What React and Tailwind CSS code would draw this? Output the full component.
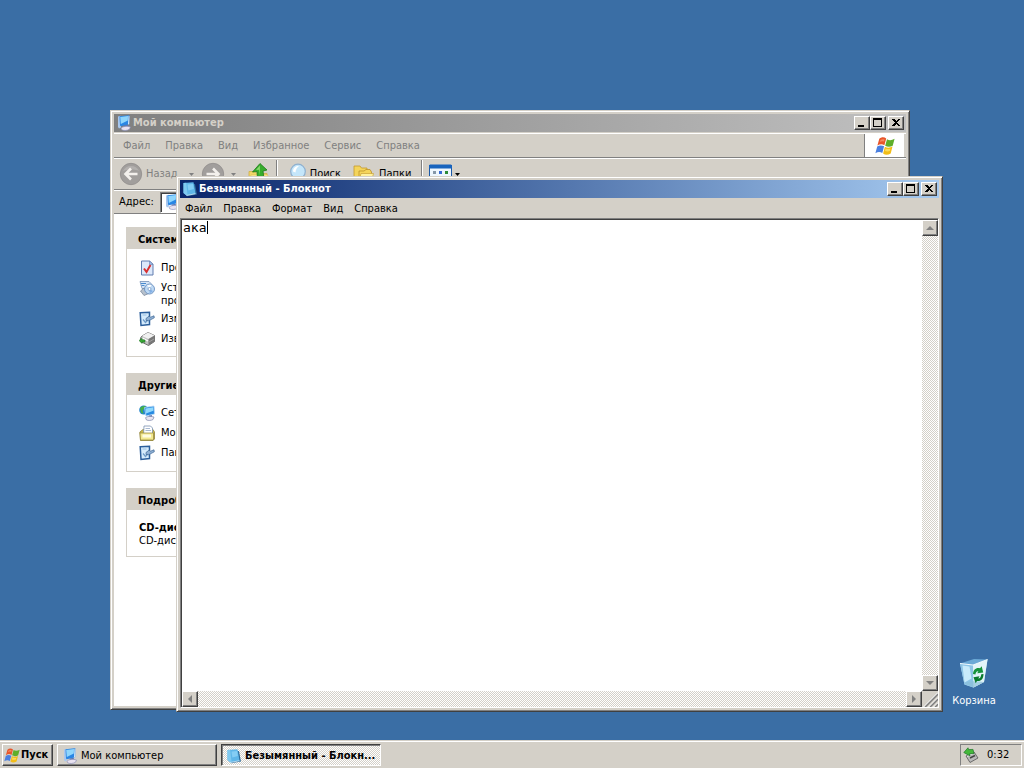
import React from "react";

const raised =
  "border border-t-white border-l-white border-r-[#404040] border-b-[#404040] bg-[#d4d0c8] shadow-[inset_-1px_-1px_#808080]";
const dither =
  "bg-[repeating-conic-gradient(#ffffff_0_25%,#d4d0c8_0_50%)] bg-[length:2px_2px]";

function Flag({ className }) {
  return (
    <svg viewBox="0 0 20 18" className={className} aria-hidden="true">
      <path d="M4.300 1.800C6.300-.2 9.300-.2 11.200 1.400L9.400 8.300C7.300 6.800 4.800 7 2.400 8.600Z" fill="#e8562a" />
      <path d="M5.500 3c1.400-1 2.800-1.100 4-.5L9 4.500c-1.500-.6-3-.4-4.200.4Z" fill="#f58a62" />
      <path d="M12 2.200c2.200 1.400 4.800 1.200 7.600-.4L17.700 8.700c-2.500 1.500-5.200 1.400-7.500.1Z" fill="#5fae2a" />
      <path d="M2.200 9.500c2.300-1.500 4.700-1.400 6.900-.2L7.300 16C5.200 14.700 2.900 14.800.4 16.200Z" fill="#4a7fe0" />
      <path d="M9.900 9.800c2.400 1.200 5 1.200 7.600-.2l-1.800 6.800c-2.600 1.800-5.400 1.900-7.600.2Z" fill="#f2bd18" />
      <path d="M10.600 11.500c1.500.7 3.200.8 4.800.2l-.6 2.200c-1.600.7-3.300.6-4.800 0Z" fill="#fbdc5c" />
    </svg>
  );
}

function ComputerIcon({ className = "size-4" }) {
  return (
    <svg viewBox="0 0 16 16" className={className} aria-hidden="true">
      <path d="M2 1.500 4.500.8 5 12.500 3 13.500 2 12Z" fill="#a9c8ee" />
      <path d="M3.500 1.300 12.500.3c.8 0 1 .4 1 1L13.200 9.300 5 11.200 4 10.500Z" fill="#2a86e4" />
      <path d="M4.200 1.900 12 1 11.800 5.500 4.800 9Z" fill="#8fd6fc" />
      <path d="M12.500.8 13.500 1.300 13.200 9.300 12 9.600Z" fill="#d5e6f8" />
      <path d="m7.500 10.600 4-.9 1 2.300-4.500 1Z" fill="#5b79b8" />
      <path d="M5 13.200c1.800-1.900 6-2.500 9.500-1.200l-1 2.200c-2.500 1.500-5.500 1.700-7.800.6Z" fill="#e9e2f0" stroke="#8388b4" strokeWidth=".6" />
    </svg>
  );
}

function NotepadIcon() {
  return (
    <svg viewBox="0 0 16 16" className="size-4" aria-hidden="true">
      <path d="m4 4 9-1L15 13.500 5 15.300Z" fill="#2e6d9c" />
      <path d="M1.500 2 11.500 1.200 13.500 12.700 4.500 14.500 1.500 12Z" fill="#5fb6e8" />
      <path d="M1.500 2 4.200 1.800 5.500 13.800 4.500 14.500 1.500 12Z" fill="#7fc9f0" />
      <path d="M5.500 3.500 11 3 11.800 8 6.300 9.500Z" fill="#84cdf4" />
      <path d="M4.500 14.500 13.500 12.700" stroke="#e5f4fc" strokeWidth=".7" />
    </svg>
  );
}

function CheckDocIcon() {
  return (
    <svg viewBox="0 0 16 16" className="size-4 shrink-0" aria-hidden="true">
      <path d="M2.500 1h8L14 4.200V15H2.500Z" fill="#dce8fa" stroke="#617daf" />
      <path d="M10.500 1v3.500H14Z" fill="#a5bfe8" stroke="#617daf" strokeWidth=".6" />
      <path d="m5 8.500 2.500 3.500L11.500 5" fill="none" stroke="#d83030" strokeWidth="2" />
    </svg>
  );
}

function ProgramsIcon() {
  return (
    <svg viewBox="0 0 16 16" className="size-4 shrink-0" aria-hidden="true">
      <path d="M1 1.500h9l2 2v5H3Z" fill="#d7e6f7" stroke="#7690b7" strokeWidth=".8" />
      <path d="M2 3.500h5M2.500 5.500h3" stroke="#498bcf" />
      <path d="M1.500 11 5 8l6 5-6 2.500Z" fill="#b7c1cc" stroke="#718096" strokeWidth=".7" />
      <circle cx="10.500" cy="9" r="5" fill="#bed9f4" stroke="#6a90c0" strokeWidth=".9" />
      <path d="M10.500 9 8 5.500c1.500-1 3.500-1 4.500-.5Z" fill="#f8fcff" />
      <path d="m10.500 9 3.500 2c-.7 1.300-1.800 2-3.500 2Z" fill="#82b0e6" />
      <circle cx="10.500" cy="9" r="1.500" fill="#fff" stroke="#5580b4" strokeWidth=".6" />
    </svg>
  );
}

function SettingsIcon() {
  return (
    <svg viewBox="0 0 16 16" className="size-4 shrink-0" aria-hidden="true">
      <path d="M1.200 1.800 10.500 1.200V13.500L2 14.500Z" fill="#d5ebfc" stroke="#2c5f9c" strokeWidth="1.500" />
      <path d="m4 8.500 2.500 3 3-3.500" fill="none" stroke="#6f9bc8" strokeWidth="1.200" />
      <path d="M7 7.500 10 5.200l1.500 1 3.500-1.400.3 2-3.800 2L9.500 9.700 7 9.500Z" fill="#8fb0d4" stroke="#3c6593" strokeWidth=".7" />
      <path d="M3.500 4h4" stroke="#9cc0e2" />
    </svg>
  );
}

function EjectIcon() {
  return (
    <svg viewBox="0 0 16 16" className="size-4 shrink-0" aria-hidden="true">
      <path d="m3 5 6-3.500 6.500 3v6L9.500 14.500l-8-4V7Z" fill="#c2c2c2" stroke="#555" strokeWidth=".8" />
      <path d="m3 5 6-3.500 6.500 3L9.500 8Z" fill="#f0f0f0" />
      <path d="m9.500 8 6-3.500v6L9.500 14.500Z" fill="#777" />
      <path d="m3.500 7 5.500 3" stroke="#fff" strokeWidth="1.200" />
      <path d="m10 11 5-3" stroke="#aaa" strokeWidth=".8" />
      <path d="M0 9.500 3 7.300v1.400l3 .3v2.200L3 11V12.500Z" fill="#39a936" stroke="#1c6d22" strokeWidth=".5" />
    </svg>
  );
}

function NetworkIcon() {
  return (
    <svg viewBox="0 0 16 16" className="size-4 shrink-0" aria-hidden="true">
      <circle cx="4.700" cy="5" r="4.500" fill="#2385ce" />
      <path d="M1 3c1.500-2 4-2.500 6-1.800L5 4 3.500 5.500 4.500 9 2 7.500Z" fill="#46b048" />
      <path d="M5.500 2.500 15 1 15.500 9 7 11Z" fill="#268ae2" stroke="#bad8f5" strokeWidth=".8" />
      <path d="m6.500 3.500 7.700-1.300.2 3.500L7 8.500Z" fill="#91d9fc" />
      <path d="m10 10.500 3-.5v2.200l-3 .5Z" fill="#6d83b8" />
      <path d="M6.500 12.700c2-1.500 5-1.700 8.500-.7l-1 2.500c-2 1.200-4.500 1.200-6.500.5Z" fill="#e9e6f2" stroke="#7c86ab" strokeWidth=".7" />
    </svg>
  );
}

function DocumentsIcon() {
  return (
    <svg viewBox="0 0 16 16" className="size-4 shrink-0" aria-hidden="true">
      <path d="M.8 7 4 4.500h10L15.500 7v7L14 15.500H1.500Z" fill="#cdbb4c" stroke="#87782b" strokeWidth=".7" />
      <path d="M5 1h6.500L13.500 3v7.500H4.500Z" fill="#fff" stroke="#7890b0" strokeWidth=".8" />
      <path d="M6.500 3.500h4.500M6.500 5.500h5.500" stroke="#a9bad2" />
      <path d="M1 8h13.500v7H1.500Z" fill="#f3e991" stroke="#948539" strokeWidth=".7" />
      <path d="M3.500 9.500h8.500v3H3.500Z" fill="#fffce2" />
    </svg>
  );
}

function RoundArrow({ flip }) {
  return (
    <svg viewBox="0 0 24 24" className={flip ? "size-6 rotate-180" : "size-6"} aria-hidden="true">
      <circle cx="12" cy="12" r="10.700" fill="#a19e9c" stroke="#908d8b" strokeWidth=".8" />
      <path d="M4 9a9 9 0 0 1 16 0c-4-2-10-2-16 0Z" fill="#b3b0ae" />
      <path d="M18.500 12H7M12 6.500 6.500 12l5.500 5.500" fill="none" stroke="#f3f0ec" strokeWidth="2.600" />
    </svg>
  );
}

function UpFolderIcon() {
  return (
    <svg viewBox="0 0 22 22" className="size-[22px]" aria-hidden="true">
      <path d="M1 8.500h6l2 2h10V20H1Z" fill="#f2d668" stroke="#d0ae45" strokeWidth=".8" />
      <path d="M3 12h17l-2 8H1Z" fill="#fff3a2" stroke="#d5bb55" strokeWidth=".6" />
      <path d="m12 .5 7 6.500-4 1 .8 6.500L9.500 16.500 9 8.500l-4.500.5Z" fill="#37ac2c" stroke="#1c7a19" strokeWidth=".8" />
      <path d="m12 2.500-4 4.500 3-.3.500 6Z" fill="#8bdc70" />
    </svg>
  );
}

function SearchIcon() {
  return (
    <svg viewBox="0 0 20 22" className="h-[22px] w-5" aria-hidden="true">
      <path d="m5 15-3 5" stroke="#9b8662" strokeWidth="3" />
      <circle cx="10" cy="8.500" r="7.300" fill="#c4e6fa" stroke="#8fb0cf" strokeWidth="1.200" />
      <path d="M5 8.500C5 5 7.500 3 11 3 9 4.500 7.500 6.500 7.500 9.500Z" fill="#fff" />
    </svg>
  );
}

function FoldersIcon() {
  return (
    <svg viewBox="0 0 22 20" className="h-5 w-[22px]" aria-hidden="true">
      <path d="M1 2h6l1.500 2H14v10H1Z" fill="#f4d45b" stroke="#c49a2b" strokeWidth=".8" />
      <path d="M6 7h5l2-1.500h4L18.500 8v9H6Z" fill="#f5d55c" stroke="#bd922a" strokeWidth=".8" />
      <path d="M8 9.500h12.500L18.500 17H6Z" fill="#fff1a0" stroke="#c9a136" strokeWidth=".7" />
    </svg>
  );
}

function ViewsIcon() {
  return (
    <svg viewBox="0 0 23 20" className="h-5 w-[23px]" aria-hidden="true">
      <rect x=".5" y="1.500" width="22" height="18" fill="#eef6fd" stroke="#1c5aa8" />
      <path d="M0 1.500 1 .5h21l1 1v3H0Z" fill="#1763bd" />
      <path d="M4 7h3v3H4zM4 13h3v3H4z" fill="#8597a8" />
      <path d="M10 7h3v3h-3zM10 13h3v3h-3z" fill="#3569d4" />
      <path d="M16 7h3v3h-3zM16 13h3v3h-3z" fill="#2b8b37" />
    </svg>
  );
}

function Caret({ className = "" }) {
  return (
    <svg viewBox="0 0 5 3" className={`h-[3px] w-[5px] shrink-0 ${className}`} aria-hidden="true">
      <path d="M0 0h5L2.500 3Z" fill="currentColor" />
    </svg>
  );
}

function CaptionButtons() {
  return (
    <div className="flex shrink-0">
      <button aria-label="Свернуть" className={`flex h-[14px] w-4 items-end justify-start pb-[2px] pl-[3px] ${raised}`}>
        <span className="h-[2px] w-[6px] bg-black" />
      </button>
      <button aria-label="Развернуть" className={`flex h-[14px] w-4 items-start justify-start pl-[2px] pt-px ${raised}`}>
        <span className="h-[9px] w-[9px] border border-t-2 border-black" />
      </button>
      <button aria-label="Закрыть" className={`ml-[2px] flex h-[14px] w-4 items-start justify-start pl-[3px] pt-[2px] ${raised}`}>
        <svg viewBox="0 0 8 7" className="h-[7px] w-2" shapeRendering="crispEdges" aria-hidden="true">
          <path d="M0 0h2l2 2 2-2h2L5 3.500 8 7H6L4 5 2 7H0l3-3.500Z" fill="#000" />
        </svg>
      </button>
    </div>
  );
}

function TitleBar({ icon, title, active }) {
  return (
    <header
      className={`flex h-[18px] shrink-0 items-center gap-px pl-[2px] pr-[2px] text-[11px] font-bold ${
        active
          ? "bg-linear-to-r from-[#0a246a] to-[#a6caf0] text-white"
          : "bg-linear-to-r from-[#808080] to-[#c0c0c0] text-[#d4d0c8]"
      }`}
    >
      {icon}
      <h2 className="min-w-0 flex-1 truncate">{title}</h2>
      <CaptionButtons />
    </header>
  );
}

function Frame({ className, label, children }) {
  return (
    <section
      aria-label={label}
      className={`absolute flex flex-col border border-t-[#d4d0c8] border-l-[#d4d0c8] border-r-[#404040] border-b-[#404040] bg-[#d4d0c8] p-[3px] shadow-[inset_1px_1px_#ffffff,inset_-1px_-1px_#808080] ${className}`}
    >
      {children}
    </section>
  );
}

function Panel({ title, children, className = "" }) {
  return (
    <section className="bg-white">
      <h3 className="flex h-[22px] items-center bg-[#d4d0c8] pl-3 pt-[3px] font-bold">{title}</h3>
      <div className={`border border-t-0 border-[#d4d0c8] pl-3 pr-2 ${className}`}>{children}</div>
    </section>
  );
}

function Task({ icon, children }) {
  return (
    <li>
      <a href="#" className="flex gap-[6px]">
        {icon}
        <span className="pt-px">{children}</span>
      </a>
    </li>
  );
}

function Separator() {
  return <span className="h-7 w-[2px] border-l border-r border-l-[#808080] border-r-white" />;
}

function Explorer() {
  return (
    <Frame label="Мой компьютер" className="left-[110px] top-[110px] h-[600px] w-[800px]">
      <TitleBar icon={<ComputerIcon />} title="Мой компьютер" />
      <div className="mt-px flex h-[25px] shrink-0 border-b border-t border-b-[#808080] border-t-white">
        <nav className="flex flex-1 items-center gap-[15px] pl-[9px] pt-px text-[#808080]">
          {["Файл", "Правка", "Вид", "Избранное", "Сервис", "Справка"].map((t) => (
            <button key={t}>{t}</button>
          ))}
        </nav>
        <div className="mr-[2px] flex w-10 items-center justify-center border-l border-l-[#808080] bg-white">
          <Flag className="h-[18px] w-5" />
        </div>
      </div>
      <div className="flex h-8 shrink-0 items-center border-b border-t border-b-[#808080] border-t-white pl-[5px]">
        <button className="flex items-center gap-[3px] text-[#808080]">
          <RoundArrow />
          Назад
          <Caret className="ml-2" />
        </button>
        <button aria-label="Вперед" className="ml-[7px] flex items-center gap-[6px] text-[#808080]">
          <RoundArrow flip />
          <Caret />
        </button>
        <button aria-label="Вверх" className="ml-3 mr-[6px]">
          <UpFolderIcon />
        </button>
        <Separator />
        <button className="ml-[10px] flex items-center gap-[2px]">
          <SearchIcon />
          Поиск
        </button>
        <button className="ml-3 mr-[10px] flex items-center gap-1">
          <FoldersIcon />
          Папки
        </button>
        <Separator />
        <button aria-label="Вид значков" className="ml-[6px] flex items-center gap-[3px]">
          <ViewsIcon />
          <Caret />
        </button>
      </div>
      <div className="flex h-6 shrink-0 items-center gap-[6px] border-b border-t border-b-[#808080] border-t-white pl-[5px] pr-1">
        <label htmlFor="address">Адрес:</label>
        <div className="flex h-[21px] min-w-0 flex-1 items-center gap-1 border border-b-white border-l-[#808080] border-r-white border-t-[#808080] bg-white pl-[3px] shadow-[inset_1px_1px_#404040]">
          <ComputerIcon />
          <input id="address" defaultValue="Мой компьютер" className="min-w-0 flex-1 bg-transparent outline-none" />
        </div>
      </div>
      <div className="min-h-0 flex-1 bg-white">
        <aside className="flex w-[222px] flex-col gap-4 pl-3 pt-[13px] leading-[13px]">
          <Panel title="Системные задачи" className="pb-[9px] pt-[11px]">
            <ul className="flex flex-col gap-1">
              <Task icon={<CheckDocIcon />}>Просмотр сведений</Task>
              <Task icon={<ProgramsIcon />}>
                Установка и удаление
                <br />
                программ
              </Task>
              <Task icon={<SettingsIcon />}>Изменение параметра</Task>
              <Task icon={<EjectIcon />}>Извлечь этот диск</Task>
            </ul>
          </Panel>
          <Panel title="Другие места" className="pb-[10px] pt-[10px]">
            <ul className="flex flex-col gap-1">
              <Task icon={<NetworkIcon />}>Сетевое окружение</Task>
              <Task icon={<DocumentsIcon />}>Мои документы</Task>
              <Task icon={<SettingsIcon />}>Панель управления</Task>
            </ul>
          </Panel>
          <Panel title="Подробно" className="pb-[9px] pt-[11px]">
            <p className="font-bold">CD-дисковод</p>
            <p>CD-дисковод</p>
          </Panel>
        </aside>
      </div>
    </Frame>
  );
}

const arrows = {
  up: "M4 0 8 4H0Z",
  down: "M0 0h8L4 4Z",
  left: "M4 0v8L0 4Z",
  right: "M0 0l4 4-4 4Z",
};

function ScrollButton({ dir, label }) {
  const vertical = dir === "up" || dir === "down";
  return (
    <button aria-label={label} className={`flex size-4 shrink-0 items-center justify-center ${raised}`}>
      <svg
        viewBox={vertical ? "0 0 8 4" : "0 0 4 8"}
        className={vertical ? "h-1 w-2" : "h-2 w-1"}
        aria-hidden="true"
      >
        <path d={arrows[dir]} fill="#808080" />
      </svg>
    </button>
  );
}

function Notepad() {
  return (
    <Frame label="Блокнот" className="left-[176px] top-[176px] h-[536px] w-[767px]">
      <TitleBar active icon={<NotepadIcon />} title="Безымянный - Блокнот" />
      <nav className="flex h-5 shrink-0 items-center gap-[11px] pl-[5px] pt-px">
        {["Файл", "Правка", "Формат", "Вид", "Справка"].map((t) => (
          <button key={t}>{t}</button>
        ))}
      </nav>
      <div className="grid min-h-0 flex-1 grid-cols-[1fr_16px] grid-rows-[1fr_16px] border border-b-white border-l-[#808080] border-r-white border-t-[#808080] pl-px pt-px shadow-[inset_1px_1px_#404040]">
        <div className="relative bg-white">
          <textarea
            aria-label="Текст"
            defaultValue="ака"
            spellCheck={false}
            className="block size-full resize-none px-px font-['DejaVu_Sans_Mono','Liberation_Mono',monospace] text-[13px] leading-[15px] outline-none"
          />
          <span className="absolute left-[25px] top-px h-[13px] w-px bg-black" />
        </div>
        <div className={`flex flex-col justify-between ${dither}`}>
          <ScrollButton dir="up" label="Прокрутить вверх" />
          <ScrollButton dir="down" label="Прокрутить вниз" />
        </div>
        <div className={`flex justify-between ${dither}`}>
          <ScrollButton dir="left" label="Прокрутить влево" />
          <ScrollButton dir="right" label="Прокрутить вправо" />
        </div>
        <svg viewBox="0 0 16 16" className="size-4" aria-hidden="true">
          <path d="M3 16 16 3M8 16l8-8M13 16l3-3" stroke="#808080" strokeWidth="1.800" />
          <path d="M1.500 16 16 1.500M6.500 16 16 6.500M11.500 16l4.500-4.500" stroke="#fff" />
        </svg>
      </div>
    </Frame>
  );
}

function RecycleBin() {
  return (
    <button className="absolute bottom-[32px] right-[12px] flex w-[76px] flex-col items-center gap-[5px] text-white">
      <svg viewBox="0 0 32 32" className="size-8" aria-hidden="true">
        <path d="M2 6.500 15 8 29.500 2.500 26 25 15.500 30.500 6.500 27.500Z" fill="#b7dcee" />
        <path d="m2 6.500 13 1.500.5 22.500L6.500 27.500Z" fill="#8cc4e6" />
        <path d="m4.500 8.500 7 1 2 12-7 4Z" fill="#c8ebfb" />
        <path d="M15 8 29.500 2.500 26 25 15.500 30.500Z" fill="#e1f3f8" />
        <path d="M2 6.500 16 2l13.500.5L15 8Z" fill="#6ba9d6" />
        <path d="M2 6.500 15 8 29.500 2.500" fill="none" stroke="#f4fcff" strokeWidth="1" />
        <path d="M6.500 26c5-2 12-2 19.500-1L15.500 30.500Z" fill="#8cbfd7" opacity=".7" />
        <path d="M15 17c.3-4.500 3.200-6.800 7-5.800l1.700-2 1.500 6.300-6 .8 1.200-2c-1.700-.3-2.700 1-3 3.200Z" fill="#16933c" />
        <path d="M25.500 17c0 5-2.500 7.500-6.500 7l-1.300 2.200-2.200-6 6-1-1.200 2.200c1.700 0 2.700-1.400 3-4.200Z" fill="#087a2b" />
      </svg>
      Корзина
    </button>
  );
}

function Taskbar() {
  return (
    <footer className="flex h-7 shrink-0 items-center border-t border-t-[#d4d0c8] bg-[#d4d0c8] px-[2px] pt-px shadow-[inset_0_1px_#ffffff]">
      <button className={`flex h-[22px] w-[51px] items-center gap-px pl-px font-bold ${raised}`}>
        <Flag className="h-[15px] w-4 shrink-0" />
        Пуск
      </button>
      <button className={`ml-1 flex h-[22px] w-40 items-center gap-[3px] pl-1 pt-px ${raised}`}>
        <ComputerIcon />
        Мой компьютер
      </button>
      <button
        className={`ml-[4px] flex h-[22px] w-40 items-center gap-[3px] border border-b-white border-l-[#404040] border-r-white border-t-[#404040] pl-1 pt-px font-bold shadow-[inset_1px_1px_#808080] ${dither}`}
      >
        <NotepadIcon />
        Безымянный - Блокн...
      </button>
      <div className="ml-auto flex h-[22px] w-[62px] items-center gap-2 border border-b-white border-l-[#808080] border-r-white border-t-[#808080] pl-[2px]">
        <svg viewBox="0 0 16 16" className="size-4 shrink-0" aria-hidden="true">
          <path d="m3 9 8-4 4 6-8 4.500Z" fill="#b9b9b9" stroke="#555" strokeWidth=".8" />
          <path d="m7 11 5-2.500" stroke="#444" strokeWidth="1.500" />
          <path d="m4 9.500 6-3" stroke="#eee" />
          <path d="M.8 5.500 5 .8l.6 1.800L10 2.400l1 4-4.500.5.500 2Z" fill="#45b83b" stroke="#20782a" strokeWidth=".7" />
        </svg>
        <time>0:32</time>
      </div>
    </footer>
  );
}

export default function App() {
  return (
    <div className="flex h-screen flex-col overflow-hidden bg-[#3a6ea5] font-['DejaVu_Sans_Condensed','DejaVu_Sans',sans-serif] text-[11px] leading-[14px] text-black">
      <main className="relative min-h-0 flex-1">
        <Explorer />
        <Notepad />
        <RecycleBin />
      </main>
      <Taskbar />
    </div>
  );
}
